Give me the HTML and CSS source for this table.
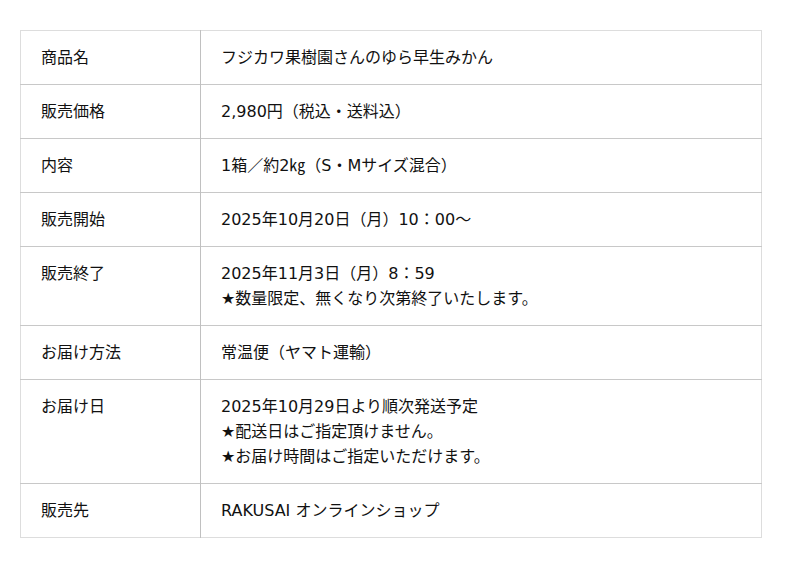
FILE: index.html
```html
<!DOCTYPE html>
<html lang="ja">
<head>
<meta charset="utf-8">
<link rel="stylesheet" href="styles.css">
</head>
<body>
<div class="wrap">
<table class="spec">
<tr><th>商品名</th><td>フジカワ果樹園さんのゆら早生みかん</td></tr>
<tr><th>販売価格</th><td>2,980円（税込・送料込）</td></tr>
<tr><th>内容</th><td>1箱／約2㎏（S・Mサイズ混合）</td></tr>
<tr><th>販売開始</th><td>2025年10月20日（月）10：00〜</td></tr>
<tr><th>販売終了</th><td>2025年11月3日（月）8：59<br>★数量限定、無くなり次第終了いたします。</td></tr>
<tr><th>お届け方法</th><td>常温便（ヤマト運輸）</td></tr>
<tr><th>お届け日</th><td>2025年10月29日より順次発送予定<br>★配送日はご指定頂けません。<br>★お届け時間はご指定いただけます。</td></tr>
<tr><th>販売先</th><td>RAKUSAI オンラインショップ</td></tr>
</table>
</div>
</body>
</html>
```
FILE: styles.css
```css
html, body {
  margin: 0;
  padding: 0;
  background: #fff;
}
.wrap {
  padding: 30px 38px 0 20px;
}
.spec {
  width: 742px;
  border-collapse: collapse;
  font-family: "DejaVu Sans", "Noto Sans CJK JP", sans-serif;
  font-size: 16px;
  line-height: 25px;
  color: #111;
  border: 1px solid #ddd;
}
.spec th, .spec td {
  text-align: left;
  font-weight: normal;
  vertical-align: top;
  padding: 14px 20px;
  border-top: 1px solid #c8c8c8;
}
.spec tr:first-child th, .spec tr:first-child td {
  border-top: 1px solid #ddd;
}
.spec th {
  width: 139px;
  border-right: 1px solid #c0c0c0;
}
```
